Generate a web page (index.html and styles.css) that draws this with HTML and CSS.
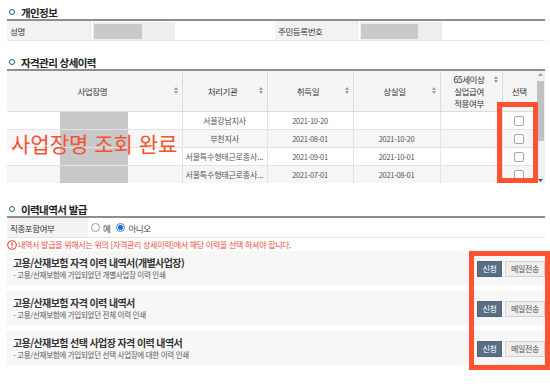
FILE: index.html
```html
<!DOCTYPE html>
<html lang="ko">
<head>
<meta charset="utf-8">
<link rel="stylesheet" href="styles.css">
</head>
<body>
<div class="page">
  <h2 class="sec-title first"><span class="bullet"></span>개인정보</h2>
  <div class="info">
    <div class="lbl">성명</div>
    <div class="val"><div class="mask"><div class="mask-in"></div></div></div>
    <div class="lbl">주민등록번호</div>
    <div class="val"><div class="mask"><div class="mask-in w57"></div></div></div>
  </div>

  <h2 class="sec-title second"><span class="bullet"></span>자격관리 상세이력</h2>
  <div class="grid-wrap">
    <div class="grid-scroll">
      <table class="grid">
        <colgroup>
          <col class="c1"><col class="c2"><col class="c3"><col class="c4"><col class="c5"><col class="c6">
        </colgroup>
        <thead>
          <tr>
            <th><div class="th-in"><span class="th-t">사업장명</span><svg class="sort" width="4" height="7" viewBox="0 0 4 7"><path d="M2 0L4 3H0Z M2 7L0 4H4Z" fill="#9a9a9a"/></svg></div></th>
            <th><div class="th-in"><span class="th-t">처리기관</span><svg class="sort" width="4" height="7" viewBox="0 0 4 7"><path d="M2 0L4 3H0Z M2 7L0 4H4Z" fill="#9a9a9a"/></svg></div></th>
            <th><div class="th-in"><span class="th-t">취득일</span><svg class="sort" width="4" height="7" viewBox="0 0 4 7"><path d="M2 0L4 3H0Z M2 7L0 4H4Z" fill="#9a9a9a"/></svg></div></th>
            <th><div class="th-in"><span class="th-t">상실일</span><svg class="sort" width="4" height="7" viewBox="0 0 4 7"><path d="M2 0L4 3H0Z M2 7L0 4H4Z" fill="#9a9a9a"/></svg></div></th>
            <th><div class="th-in top"><span class="th-t">65세이상<br>실업급여<br>적용여부</span><svg class="sort" width="4" height="7" viewBox="0 0 4 7"><path d="M2 0L4 3H0Z M2 7L0 4H4Z" fill="#9a9a9a"/></svg></div></th>
            <th><div class="th-in"><span class="th-t">선택</span></div></th>
          </tr>
        </thead>
        <tbody>
          <tr>
            <td class="biz"><div class="biz-mask"></div></td>
            <td>서울강남지사</td><td class="dt">2021-10-20</td><td></td><td></td>
            <td><span class="chk"></span></td>
          </tr>
          <tr class="alt">
            <td class="biz"><div class="biz-mask"></div></td>
            <td>부천지사</td><td class="dt">2021-08-01</td><td class="dt">2021-10-20</td><td></td>
            <td><span class="chk"></span></td>
          </tr>
          <tr>
            <td class="biz"><div class="biz-mask"></div></td>
            <td class="ell">서울특수형태근로종사...</td><td class="dt">2021-09-01</td><td class="dt">2021-10-01</td><td></td>
            <td><span class="chk"></span></td>
          </tr>
          <tr class="alt">
            <td class="biz"><div class="biz-mask"></div></td>
            <td class="ell">서울특수형태근로종사...</td><td class="dt">2021-07-01</td><td class="dt">2021-08-01</td><td></td>
            <td><span class="chk"></span></td>
          </tr>
        </tbody>
      </table>
    </div>
    <div class="sbar">
      <svg class="sarrow" width="5" height="3" viewBox="0 0 5 3"><path d="M2.5 0L5 3H0Z" fill="#a3a3a3"/></svg>
      <div class="sthumb"></div>
      <div class="sfill"></div>
      <svg class="sarrow" width="5" height="3" viewBox="0 0 5 3"><path d="M0 0H5L2.5 3Z" fill="#505050"/></svg>
    </div>
  </div>

  <h2 class="sec-title third"><span class="bullet"></span>이력내역서 발급</h2>
  <div class="opt">
    <div class="lbl">직종포함여부</div>
    <div class="radios">
      <span class="radio"></span><span class="rtxt">예</span>
      <span class="radio on"></span><span class="rtxt">아니오</span>
    </div>
  </div>
  <p class="warn"><svg class="warn-ic" width="10" height="10" viewBox="0 0 10 10"><circle cx="5" cy="5" r="4.3" fill="none" stroke="#e84a35" stroke-width="1.1"/><path d="M5 2.3V5.8" stroke="#e84a35" stroke-width="1.2"/><circle cx="5" cy="7.3" r="0.7" fill="#e84a35"/></svg>내역서 발급을 위해서는 위의 [자격관리 상세이력]에서 해당 이력을 선택 하셔야 합니다.</p>

  <div class="doc">
    <div class="doc-txt">
      <div class="doc-t">고용/산재보험 자격 이력 내역서(개별사업장)</div>
      <div class="doc-s">- 고용/산재보험에 가입되었던 개별사업장 이력 인쇄</div>
    </div>
    <div class="btns"><button class="btn pri">신청</button><button class="btn sec">메일전송</button></div>
  </div>
  <div class="doc">
    <div class="doc-txt">
      <div class="doc-t">고용/산재보험 자격 이력 내역서</div>
      <div class="doc-s">- 고용/산재보험에 가입되었던 전체 이력 인쇄</div>
    </div>
    <div class="btns"><button class="btn pri">신청</button><button class="btn sec">메일전송</button></div>
  </div>
  <div class="doc">
    <div class="doc-txt">
      <div class="doc-t">고용/산재보험 선택 사업장 자격 이력 내역서</div>
      <div class="doc-s">- 고용/산재보험에 가입되었던 선택 사업장에 대한 이력 인쇄</div>
    </div>
    <div class="btns"><button class="btn pri">신청</button><button class="btn sec">메일전송</button></div>
  </div>
</div>

<div class="note">사업장명 조회 완료</div>
<div class="hl hl-chk"></div>
<div class="hl hl-btn"></div>
</body>
</html>
```
FILE: styles.css
```css
* { box-sizing: border-box; }
html, body { margin: 0; padding: 0; background: #fff; }
body {
  width: 550px;
  height: 387px;
  overflow: hidden;
  position: relative;
  font-family: "Noto Sans CJK KR", "Noto Sans", sans-serif;
  font-size: 8.5px;
  letter-spacing: -0.4px;
  color: #444;
}
.page { padding: 0 5px 0 7px; }

.sec-title {
  display: flex;
  align-items: center;
  height: 14px;
  margin: 0;
  font-size: 10.5px;
  font-weight: bold;
  letter-spacing: -0.6px;
  color: #222;
}
.sec-title.first { margin-top: 5px; }
.sec-title.second { margin-top: 14px; }
.sec-title.third { margin-top: 19px; }
.bullet {
  width: 6px;
  height: 6px;
  border: 1.8px solid #1f5a7e;
  border-radius: 50%;
  margin: 0 6px 0 2px;
}

/* personal info */
.info {
  display: grid;
  grid-template-columns: 83px 185px 82px 1fr;
  height: 22px;
  border-top: 2px solid #8e8e8e;
  border-bottom: 1px solid #e3e3e3;
}
.lbl {
  background: #f3f3f3;
  display: flex;
  align-items: center;
  padding-left: 3px;
  color: #333;
}
.val { padding: 0 0 0 2px; display: flex; align-items: center; border-left: 1px solid #e6e6e6; }
.mask { width: 82px; height: 18px; background: #eeeeee; padding: 2px 1px; }
.mask-in { width: 48px; height: 15px; background: #c9c9c9; }
.mask-in.w57 { width: 57px; }

/* history grid */
.grid-wrap {
  display: flex;
  height: 114px;
  border-top: 2px solid #8e8e8e;
}
.grid-scroll { flex: 1; overflow: hidden; }
.grid {
  width: 529px;
  table-layout: fixed;
  border-collapse: collapse;
}
.c1 { width: 175px; } .c2 { width: 85px; } .c3 { width: 86px; }
.c4 { width: 87px; } .c5 { width: 62px; } .c6 { width: 34px; }
.grid th {
  height: 40px;
  padding: 0;
  background: #f5f5f5;
  border-right: 1px solid #dcdcdc;
  border-bottom: 1px solid #dcdcdc;
  font-weight: normal;
  color: #333;
}
.grid th:last-child { border-right: none; }
.th-in { display: flex; align-items: center; padding: 0 4px 0 4px; line-height: 12px; }
.th-in.top { align-items: flex-start; }
.th-in.top .sort { margin-top: 3px; }
.th-t { flex: 1; text-align: center; }
.sort { flex: none; }
.grid td {
  height: 17px;
  padding: 0;
  text-align: center;
  border-right: 1px solid #e3e3e3;
  border-bottom: 1px solid #e3e3e3;
  color: #555;
  font-size: 8px;
  letter-spacing: -0.2px;
  white-space: nowrap;
  overflow: hidden;
}
.grid td.dt { font-size: 7.5px; letter-spacing: -0.3px; }
.grid td:last-child { border-right: none; }
.grid tr.alt td { background: #f6f6f6; }
.grid td.biz { vertical-align: top; }
.biz-mask { width: 68px; height: 17px; margin-left: 53px; background: #c8c8c8; }
.grid td.ell { text-align: left; padding-left: 3px; }
.chk {
  display: inline-block;
  width: 10px;
  height: 10px;
  border: 1px solid #a8a8a8;
  border-radius: 2px;
  background: #fff;
  vertical-align: middle;
}

.sbar {
  width: 9px;
  background: #f1f1f1;
  display: flex;
  flex-direction: column;
  align-items: center;
  padding: 2px 0 1px;
}
.sarrow { flex: none; }
.sthumb { width: 7px; height: 60px; margin-top: 5px; background: #c1c1c1; }
.sfill { flex: 1; }

/* option row */
.opt {
  display: grid;
  grid-template-columns: 81px 1fr;
  height: 22px;
  border-top: 2px solid #8e8e8e;
  border-bottom: 1px solid #e3e3e3;
}
.radios { display: flex; align-items: center; padding-left: 3px; }
.radio {
  width: 9px; height: 9px;
  border: 1px solid #9a9a9a;
  border-radius: 50%;
  background: #fff;
  margin-right: 3px;
}
.radio.on { border-color: #3b7de0; background: radial-gradient(circle, #1a73e8 0 2.3px, #fff 2.8px); margin-left: 6px; }
.rtxt { color: #444; }

.warn {
  margin: 0;
  height: 13px;
  display: flex;
  align-items: center;
  color: #e8503a;
  font-size: 8px;
  letter-spacing: -0.3px;
}
.warn-ic { margin-right: 1px; flex: none; }

.doc {
  display: flex;
  align-items: center;
  height: 35px;
  margin-bottom: 5px;
  background: #f7f7f7;
  padding-left: 6px;
}
.doc-txt { flex: 1; }
.doc-t { font-size: 10px; font-weight: bold; color: #333; letter-spacing: -0.6px; line-height: 12px; }
.doc-s { font-size: 7.5px; color: #555; letter-spacing: -0.3px; line-height: 11px; }
.btns { display: flex; gap: 3px; }
.btn {
  height: 16px;
  padding: 0;
  font-family: inherit;
  font-size: 8px;
  letter-spacing: -0.4px;
  border-radius: 0;
  cursor: pointer;
}
.btn.pri { width: 25px; background: #5a6e83; color: #fff; border: 1px solid #52667b; }
.btn.sec { width: 40px; background: #eeeeee; color: #555; border: 1px solid #d2d2d2; }

/* annotations */
.note {
  position: absolute;
  left: 11px;
  top: 129px;
  font-size: 21px;
  letter-spacing: 0;
  color: #f4532f;
  line-height: 28px;
}
.hl { position: absolute; border: 5px solid #ff5230; }
.hl-chk { left: 497px; top: 102px; width: 41px; height: 81px; }
.hl-btn { left: 469px; top: 251px; width: 81px; height: 119px; }
```
